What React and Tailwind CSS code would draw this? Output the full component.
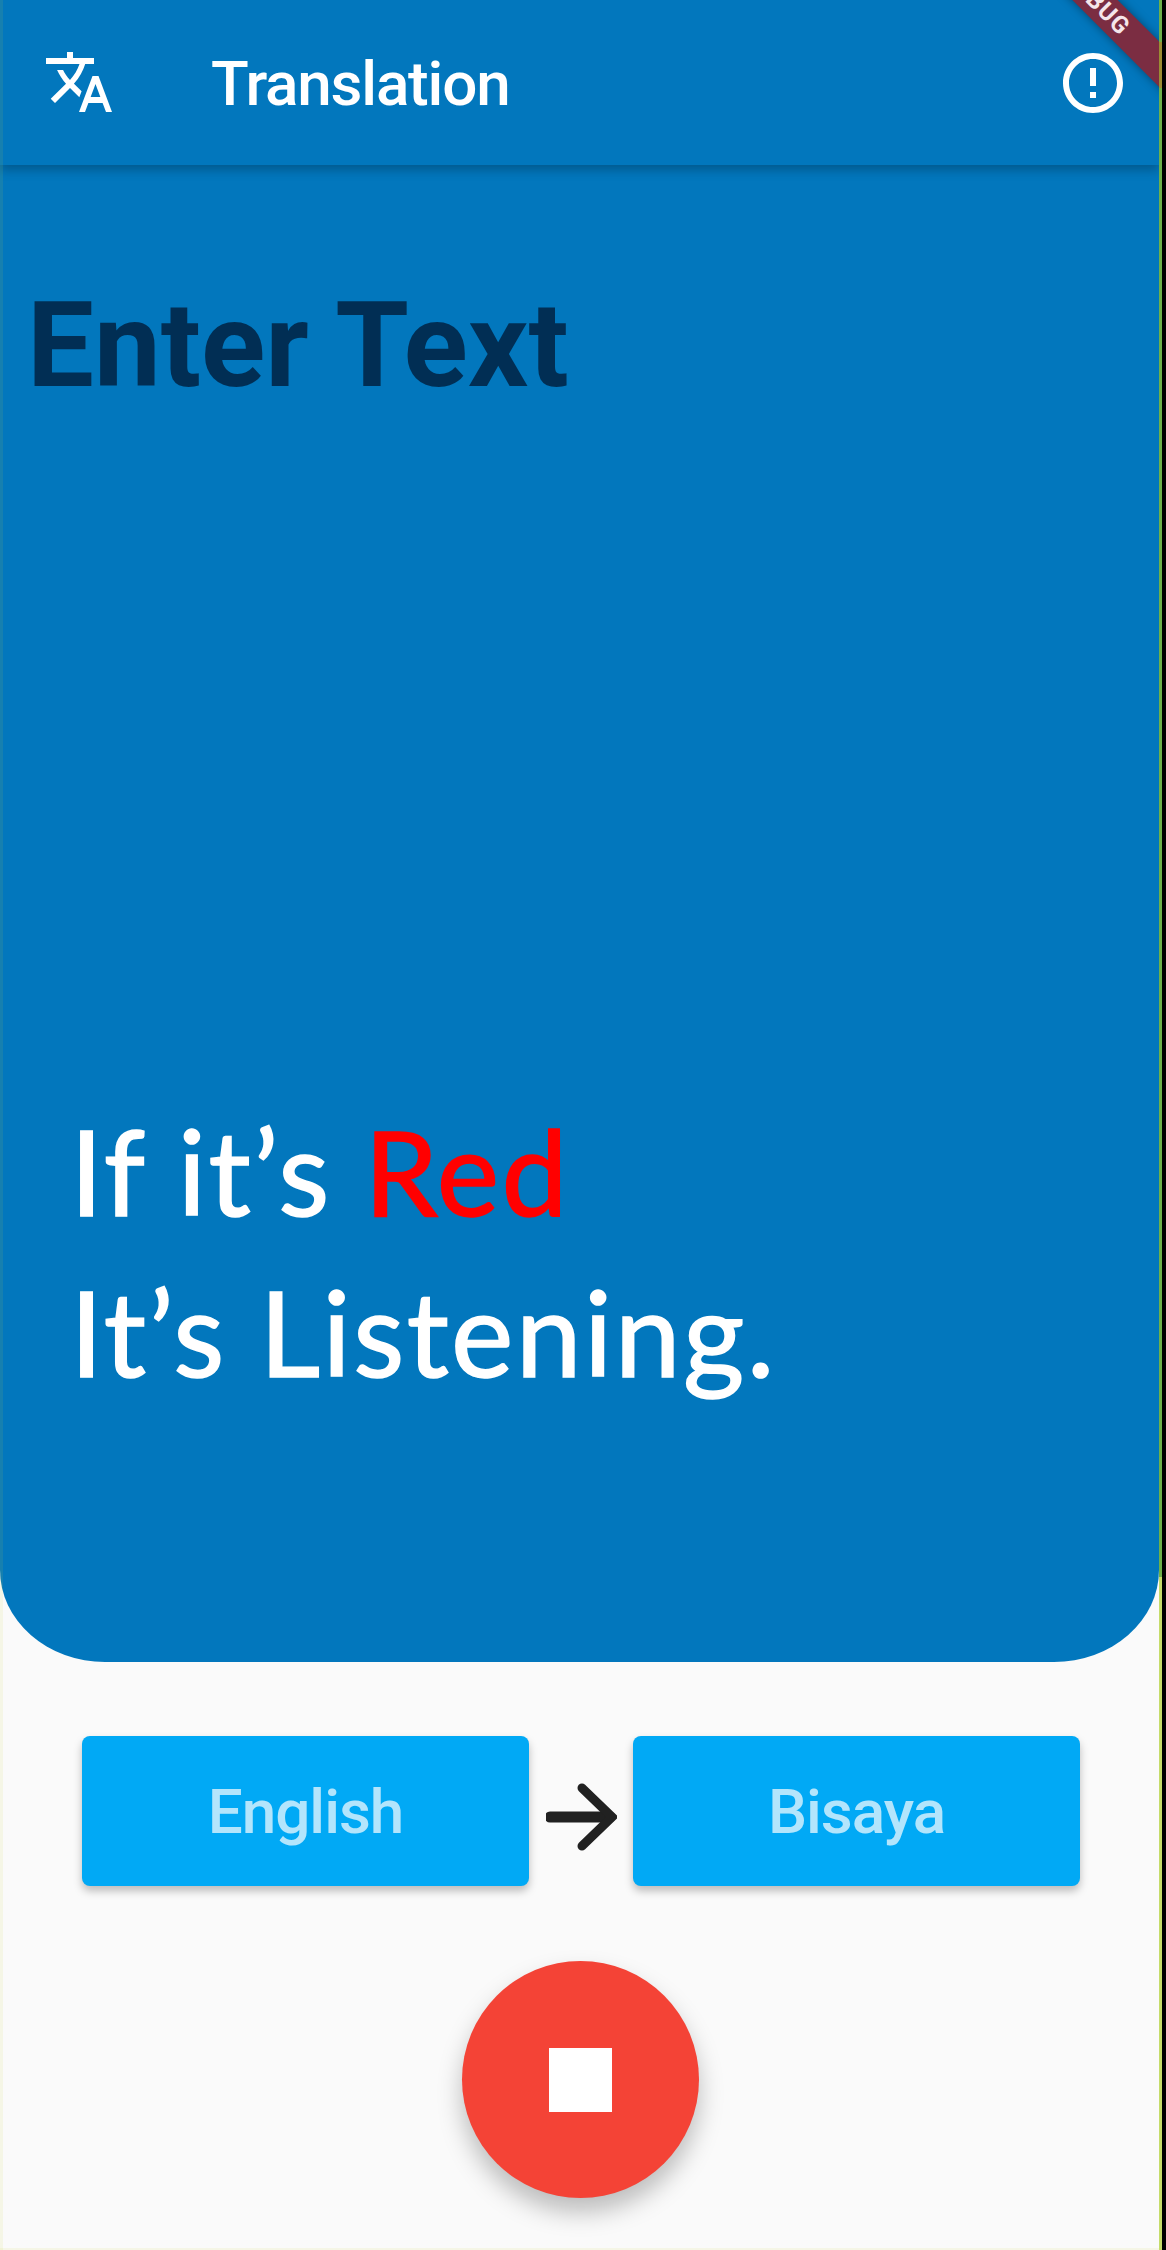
import { MdTranslate, MdErrorOutline } from "react-icons/md";

function LangButton({ label }) {
  return (
    <div className="flex h-[150px] w-[447px] items-center justify-center rounded-[8px] bg-[#01a9f5] text-[62px] font-medium tracking-[-1px] text-[#b3e5fc] shadow-[0_5px_8px_rgba(0,0,0,0.25)]">
      {label}
    </div>
  );
}

export default function App() {
  return (
    <div className="relative flex h-[2250px] w-[1166px] overflow-hidden bg-black font-['Roboto',sans-serif]">
      <main className="relative flex h-full w-[1159px] shrink-0 flex-col overflow-hidden bg-[#fafafa]">
        <section className="flex h-[1662px] shrink-0 flex-col rounded-bl-[105px_92px] rounded-br-[105px_92px] bg-[#0277bd]">
          <header className="flex h-[165px] shrink-0 items-center justify-between pl-[43px] pr-[30px] shadow-[0_5px_10px_rgba(0,0,0,0.25)]">
            <div className="flex items-center gap-[96px]">
              <MdTranslate className="mb-[2px] h-[72px] w-[72px] text-white" />
              <span className="pt-[2px] text-[62px] font-medium tracking-[-1.2px] text-white">Translation</span>
            </div>
            <MdErrorOutline className="h-[72px] w-[72px] text-white" />
          </header>
          <h1 className="mt-[110px] pl-[27px] text-[119px] leading-[1.2] font-bold text-[#012e54]">Enter Text</h1>
          <div className="mt-[672px] pl-[70px] font-['Lato',sans-serif] text-[118px] leading-[161px] tracking-[2.4px] text-white [-webkit-text-stroke:1.5px_currentColor]">
            <p>If it’s <span className="text-[#ff0000]">Red</span></p>
            <p>It’s Listening.</p>
          </div>
        </section>
        <div className="mt-[74px] flex items-center pl-[82px]">
          <LangButton label="English" />
          <svg viewBox="0 0 71 68" className="ml-[17px] mr-[16px] mt-[12px] h-[68px] w-[71px] shrink-0 text-[#212121]" fill="none" stroke="currentColor" strokeLinecap="round" strokeLinejoin="miter">
            <path d="M4 34H64" strokeWidth="11" />
            <path d="M36 5L66 34L36 63" strokeWidth="9" />
          </svg>
          <LangButton label="Bisaya" />
        </div>
        <div className="mt-[75px] flex justify-center pl-[2px]">
          <div className="flex h-[237px] w-[237px] items-center justify-center rounded-full bg-[#f44336] shadow-[0_14px_24px_rgba(0,0,0,0.25)]">
            <div className="h-[64px] w-[63px] bg-white" />
          </div>
        </div>
        <div className="absolute left-0 top-0 h-full w-[3px] bg-[#cddc39]/10" />
        <div className="absolute bottom-0 left-0 h-[2px] w-full bg-[#cddc39]/10" />
        <div className="absolute left-[967px] top-[-14px] flex h-[32px] w-[260px] rotate-45 items-center justify-center bg-[#7b2d42] text-[24px] font-bold tracking-[1px] text-[#f5e6ea] shadow-[0_0_10px_rgba(0,0,0,0.4)]">
          DEBUG
        </div>
      </main>
      <div className="flex h-full w-[3px] shrink-0 flex-col">
        <div className="h-[42px] bg-[#6db04b]" />
        <div className="h-[46px] bg-[#9b8c33]" />
        <div className="h-[1489px] bg-[#6db04b]" />
        <div className="flex-1 bg-[#c5dc6a]" />
      </div>
    </div>
  );
}
